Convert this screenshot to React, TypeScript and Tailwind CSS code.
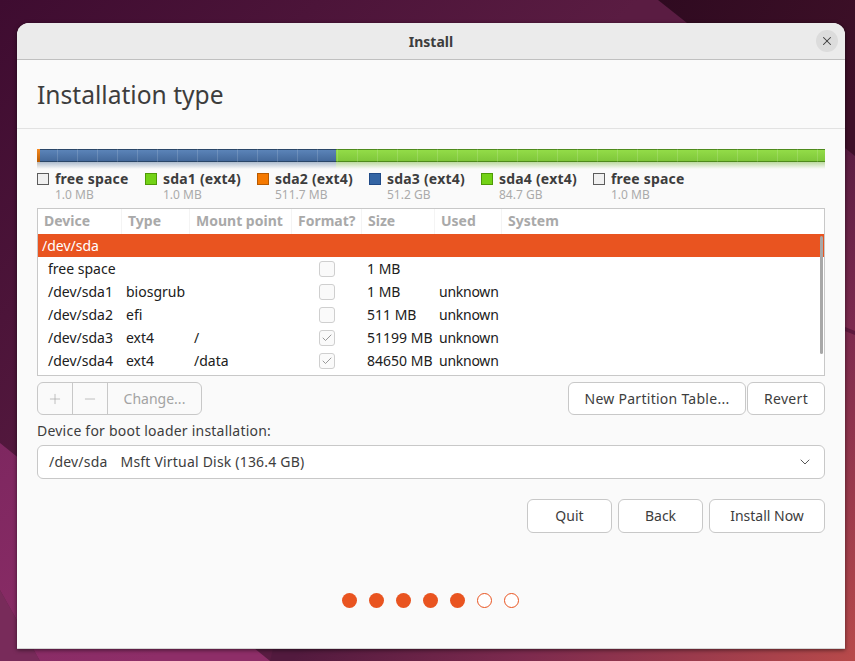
import { X, Plus, Minus, ChevronDown, Check } from "lucide-react";

const legend = [
  { name: "free space", size: "1.0 MB", box: "bg-[#f0f0f0] border-[#5c5c5c]", width: "w-[108px]" },
  { name: "sda1 (ext4)", size: "1.0 MB", box: "bg-[#73d216] border-[#4e9a06]", width: "w-[112px]" },
  { name: "sda2 (ext4)", size: "511.7 MB", box: "bg-[#f57900] border-[#b85a00]", width: "w-[112px]" },
  { name: "sda3 (ext4)", size: "51.2 GB", box: "bg-[#3465a4] border-[#204a87]", width: "w-[112px]" },
  { name: "sda4 (ext4)", size: "84.7 GB", box: "bg-[#73d216] border-[#4e9a06]", width: "w-[112px]" },
  { name: "free space", size: "1.0 MB", box: "bg-[#f0f0f0] border-[#5c5c5c]", width: "w-[108px]" },
];

const headers = [
  { label: "Device", width: "w-[84px]" },
  { label: "Type", width: "w-[68px]" },
  { label: "Mount point", width: "w-[102px]" },
  { label: "Format?", width: "w-[70px]" },
  { label: "Size", width: "w-[73px]" },
  { label: "Used", width: "w-[67px]" },
  { label: "System", width: "flex-1" },
];

const rows = [
  { device: "free space", type: "", mount: "", checked: false, size: "1 MB", used: "" },
  { device: "/dev/sda1", type: "biosgrub", mount: "", checked: false, size: "1 MB", used: "unknown" },
  { device: "/dev/sda2", type: "efi", mount: "", checked: false, size: "511 MB", used: "unknown" },
  { device: "/dev/sda3", type: "ext4", mount: "/", checked: true, size: "51199 MB", used: "unknown" },
  { device: "/dev/sda4", type: "ext4", mount: "/data", checked: true, size: "84650 MB", used: "unknown" },
];

const Wallpaper = () => (
  <svg className="absolute inset-0 h-full w-full" viewBox="0 0 855 661" preserveAspectRatio="none">
    <defs>
      <linearGradient id="base" gradientUnits="userSpaceOnUse" x1="0" y1="0" x2="320" y2="320">
        <stop offset="0" stopColor="#3e0c30" />
        <stop offset="1" stopColor="#5a1c42" />
      </linearGradient>
      <linearGradient id="warm" gradientUnits="userSpaceOnUse" x1="475" y1="475" x2="758" y2="758">
        <stop offset="0" stopColor="#521a3e" />
        <stop offset="0.4" stopColor="#7c2a4e" />
        <stop offset="1" stopColor="#b84a4a" />
      </linearGradient>
      <linearGradient id="bright" gradientUnits="userSpaceOnUse" x1="0" y1="443" x2="150" y2="661">
        <stop offset="0" stopColor="#7e2760" />
        <stop offset="1" stopColor="#8e2e68" />
      </linearGradient>
      <linearGradient id="dark" gradientUnits="userSpaceOnUse" x1="658" y1="0" x2="855" y2="100">
        <stop offset="0" stopColor="#2f0a20" />
        <stop offset="1" stopColor="#3e1028" />
      </linearGradient>
    </defs>
    <rect width="855" height="661" fill="url(#base)" />
    <polygon points="400,100 855,156 855,661 270,661" fill="url(#warm)" />
    <polygon points="658,0 855,0 855,156" fill="url(#dark)" />
    <polygon points="845,327 855,331 855,335 845,331" fill="#5e1a3e" />
    <polygon points="0,590 40,661 0,661" fill="#782b5a" />
    <polygon points="0,443 270,661 40,661 0,590" fill="url(#bright)" />
  </svg>
);

export default function App() {
  return (
    <div className="relative h-[661px] w-[855px] overflow-hidden bg-[#4f1a3a] pl-[17px] pt-[23px] font-['Noto_Sans',sans-serif] text-[14px] text-[#3d3d3d]">
      <Wallpaper />
      <div className="relative flex h-[626px] w-[828px] flex-col rounded-t-[12px] border-b border-[#d4d4d4] bg-[#fafafa] shadow-[0_1px_4px_rgba(0,0,0,0.55)]">
        <div className="relative flex h-[37px] shrink-0 items-center justify-center rounded-t-[12px] border-b border-[#c0c0c0] bg-[#ebebeb]">
          <span className="text-[14px] font-bold">Install</span>
          <button className="absolute right-[7px] top-[7px] flex h-[22px] w-[22px] items-center justify-center rounded-full bg-[#dcdcdc]">
            <X size={14} strokeWidth={1.8} />
          </button>
        </div>

        <div className="flex h-[69px] shrink-0 items-center border-b border-[#e2e2e2] pl-5 pt-[2px] text-[24.6px] leading-none">
          Installation type
        </div>

        <div className="flex flex-1 flex-col px-5 pt-5">
          <div className="relative flex h-[20px] w-[788px]">
            <div className="flex w-[3px] flex-col">
              <div className="h-[13px] bg-gradient-to-b from-[#f58a20] to-[#b85a00]" />
              <div className="h-[7px] bg-gradient-to-b from-[#bbb] to-transparent" />
            </div>
            <div className="flex w-[296px] flex-col">
              <div className="h-[13px] border-y border-[#2a4668] bg-gradient-to-b from-[#5b84b8] to-[#44699b]" />
              <div className="h-[7px] bg-gradient-to-b from-[#aebccd] to-transparent" />
            </div>
            <div className="flex flex-1 flex-col">
              <div className="h-[13px] border-y border-[#4e8a1c] bg-gradient-to-b from-[#93dc48] to-[#7fc73a]" />
              <div className="h-[7px] bg-gradient-to-b from-[#bcd9a0] to-transparent" />
            </div>
            <div className="absolute left-0 top-0 h-[13px] w-full bg-[repeating-linear-gradient(90deg,transparent_0,transparent_19px,rgba(255,255,255,0.14)_19px,rgba(255,255,255,0.14)_20px)] bg-[position:1px_0]" />
          </div>

          <div className="mt-[3px] flex">
            {legend.map((item, i) => (
              <div key={i} className={`flex gap-[6px] ${item.width}`}>
                <div className={`mt-px h-3 w-3 shrink-0 border ${item.box}`} />
                <div className="flex flex-col">
                  <span className="text-[14px] font-bold leading-[14px] tracking-[0.2px]">{item.name}</span>
                  <span className="mt-[1px] text-[12px] leading-[16px] text-[#aaaaaa]">{item.size}</span>
                </div>
              </div>
            ))}
          </div>

          <div className="relative mt-[5px] h-[168px] w-[788px] border border-[#c8c8c8] bg-white">
            <div className="flex h-[25px] items-center bg-white">
              {headers.map((h) => (
                <div
                  key={h.label}
                  className={`flex h-full items-center border-r border-[#f4f4f4] pb-[2px] pl-[6px] text-[14px] font-bold text-[#a9a9a9] last:border-r-0 ${h.width}`}
                >
                  {h.label}
                </div>
              ))}
            </div>
            <div className="flex h-[23px] items-center bg-[#e95420] pl-1 text-white">/dev/sda</div>
            {rows.map((row) => (
              <div key={row.device} className="flex h-[23px] items-center text-[#202020]">
                <div className="w-[84px] pl-[10px]">{row.device}</div>
                <div className="w-[68px] pl-1">{row.type}</div>
                <div className="w-[102px] pl-1">{row.mount}</div>
                <div className="flex w-[70px] justify-center">
                  <div className="flex h-4 w-4 items-center justify-center rounded-[3px] border border-[#cfcfcf] bg-[#fafafa] text-[#808080]">
                    {row.checked && <Check size={12} strokeWidth={1.6} />}
                  </div>
                </div>
                <div className="w-[73px] pl-[5px]">{row.size}</div>
                <div className="pl-[4px] tracking-[-0.25px]">{row.used}</div>
              </div>
            ))}
            <div className="absolute right-[1px] top-[27px] h-[118px] w-[3px] rounded-full bg-[#a8a8a8]" />
          </div>

          <div className="mt-[6px] flex h-[33px] justify-between">
            <div className="flex rounded-[6px] border border-[#c8c8c8] text-[#a3a3a3]">
              <div className="flex w-[35px] items-center justify-center border-r border-[#c8c8c8]">
                <Plus size={16} strokeWidth={1} />
              </div>
              <div className="flex w-[35px] items-center justify-center border-r border-[#c8c8c8]">
                <Minus size={16} strokeWidth={1} />
              </div>
              <div className="flex w-[93px] items-center justify-center">Change...</div>
            </div>
            <div className="flex gap-px">
              <button className="h-full w-[178px] rounded-[6px] border border-[#c8c8c8] bg-white tracking-[0.27px]">New Partition Table...</button>
              <button className="h-full w-[78px] rounded-[6px] border border-[#c8c8c8] bg-white tracking-[0.3px]">Revert</button>
            </div>
          </div>

          <div className="mt-[6px] leading-[20px] tracking-[0.22px]">Device for boot loader installation:</div>

          <div className="mt-[4px] flex h-[34px] items-center justify-between rounded-[6px] border border-[#c8c8c8] bg-white pb-[1px] pl-[11px] pr-[11px]">
            <span className="flex gap-[13px] tracking-[0.2px]">
              <span>/dev/sda</span>
              <span>Msft Virtual Disk (136.4 GB)</span>
            </span>
            <ChevronDown size={16} strokeWidth={1.3} />
          </div>

          <div className="mt-5 flex h-[34px] justify-end gap-[6px]">
            <button className="w-[85px] rounded-[6px] border border-[#c8c8c8] bg-white pb-[1px]">Quit</button>
            <button className="w-[85px] rounded-[6px] border border-[#c8c8c8] bg-white pb-[1px]">Back</button>
            <button className="w-[116px] rounded-[6px] border border-[#c8c8c8] bg-white pb-[1px]">Install Now</button>
          </div>

          <div className="mt-[60px] flex justify-center gap-3 pr-[2px]">
            {[0, 1, 2, 3, 4].map((i) => (
              <div key={i} className="h-[15px] w-[15px] rounded-full bg-[#e95420]" />
            ))}
            {[5, 6].map((i) => (
              <div key={i} className="h-[15px] w-[15px] rounded-full border border-[#e95420] bg-white" />
            ))}
          </div>
        </div>
      </div>
    </div>
  );
}
